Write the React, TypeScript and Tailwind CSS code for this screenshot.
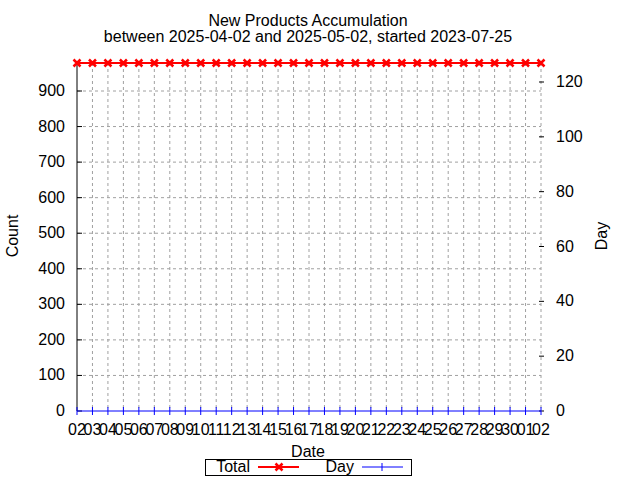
export default function App() {
  const L = 77, R = 541, T = 63, B = 411;
  const n = 31;
  const dx = (R - L) / (n - 1);
  const xs = Array.from({ length: n }, (_, i) => L + i * dx);
  const labels = Array.from({ length: n }, (_, i) => {
    const d = i < 29 ? i + 2 : i - 28;
    return String(d).padStart(2, "0");
  });
  const yOf = (v: number) => B - (v / 900) * (B - 91);
  const yR = (v: number) => B - (v / 120) * (B - 82);
  const left = [0, 100, 200, 300, 400, 500, 600, 700, 800, 900];
  const right = [0, 20, 40, 60, 80, 100, 120];

  return (
    <div className="w-[640px] h-[480px] bg-white" style={{ fontFamily: '"Liberation Sans", Arial, sans-serif' }}>
      <svg width="640" height="480" className="block">
        <text x="308" y="26" fontSize="16" textAnchor="middle" fill="#000">New Products Accumulation</text>
        <text x="308" y="42" fontSize="16" textAnchor="middle" fill="#000">between 2025-04-02 and 2025-05-02, started 2023-07-25</text>

        {left.slice(1).map((v) => (
          <line key={"h" + v} x1={L} x2={R} y1={yOf(v)} y2={yOf(v)} stroke="#a0a0a0" strokeDasharray="3 3" />
        ))}
        {xs.slice(1).map((x, i) => (
          <line key={"v" + i} x1={x} x2={x} y1={T} y2={B} stroke="#a0a0a0" strokeDasharray="3 3" />
        ))}

        <line x1={L} x2={L} y1={T} y2={B} stroke="#000" />
        {left.map((v) => (
          <g key={"l" + v}>
            <line x1={L} x2={L + 5} y1={yOf(v)} y2={yOf(v)} stroke="#000" />
            <text x={65} y={yOf(v) + 5} fontSize="16" textAnchor="end" fill="#000">{v}</text>
          </g>
        ))}
        {right.map((v) => (
          <g key={"r" + v}>
            <line x1={R - 2} x2={R + 3} y1={yR(v)} y2={yR(v)} stroke="#000" />
            <text x={556} y={yR(v) + 5} fontSize="16" fill="#000">{v}</text>
          </g>
        ))}

        <line x1={L} x2={R} y1={B} y2={B} stroke="#0000ff" />
        {xs.map((x, i) => (
          <g key={"d" + i}>
            <line x1={x} x2={x} y1={B - 4} y2={B + 4} stroke="#0000ff" />
            <text x={x} y={B + 24} fontSize="16" textAnchor="middle" fill="#000">{labels[i]}</text>
          </g>
        ))}

        <line x1={L} x2={R} y1={T} y2={T} stroke="#ff0000" strokeWidth="2" />
        {xs.map((x, i) => (
          <path key={"x" + i} d={`M${x - 3.5} ${T - 3.5}L${x + 3.5} ${T + 3.5}M${x - 3.5} ${T + 3.5}L${x + 3.5} ${T - 3.5}`} stroke="#ff0000" strokeWidth="2.5" />
        ))}

        <text x="18" y="236" fontSize="16" textAnchor="middle" transform="rotate(-90 18 236)" fill="#000">Count</text>
        <text x="607" y="236" fontSize="16" textAnchor="middle" transform="rotate(-90 607 236)" fill="#000">Day</text>
        <text x="308" y="457" fontSize="16" textAnchor="middle" fill="#000">Date</text>

        <rect x="205.5" y="459.5" width="206" height="16" fill="none" stroke="#000" />
        <text x="250" y="472" fontSize="16" textAnchor="end" fill="#000">Total</text>
        <line x1="258" x2="299" y1="467" y2="467" stroke="#ff0000" strokeWidth="2" />
        <path d="M275.5 463.5L282.5 470.5M275.5 470.5L282.5 463.5" stroke="#ff0000" strokeWidth="2.5" />
        <text x="354" y="472" fontSize="16" textAnchor="end" fill="#000">Day</text>
        <line x1="362" x2="403" y1="467" y2="467" stroke="#0000ff" />
        <line x1="382" x2="382" y1="463" y2="471" stroke="#0000ff" />
      </svg>
    </div>
  );
}
